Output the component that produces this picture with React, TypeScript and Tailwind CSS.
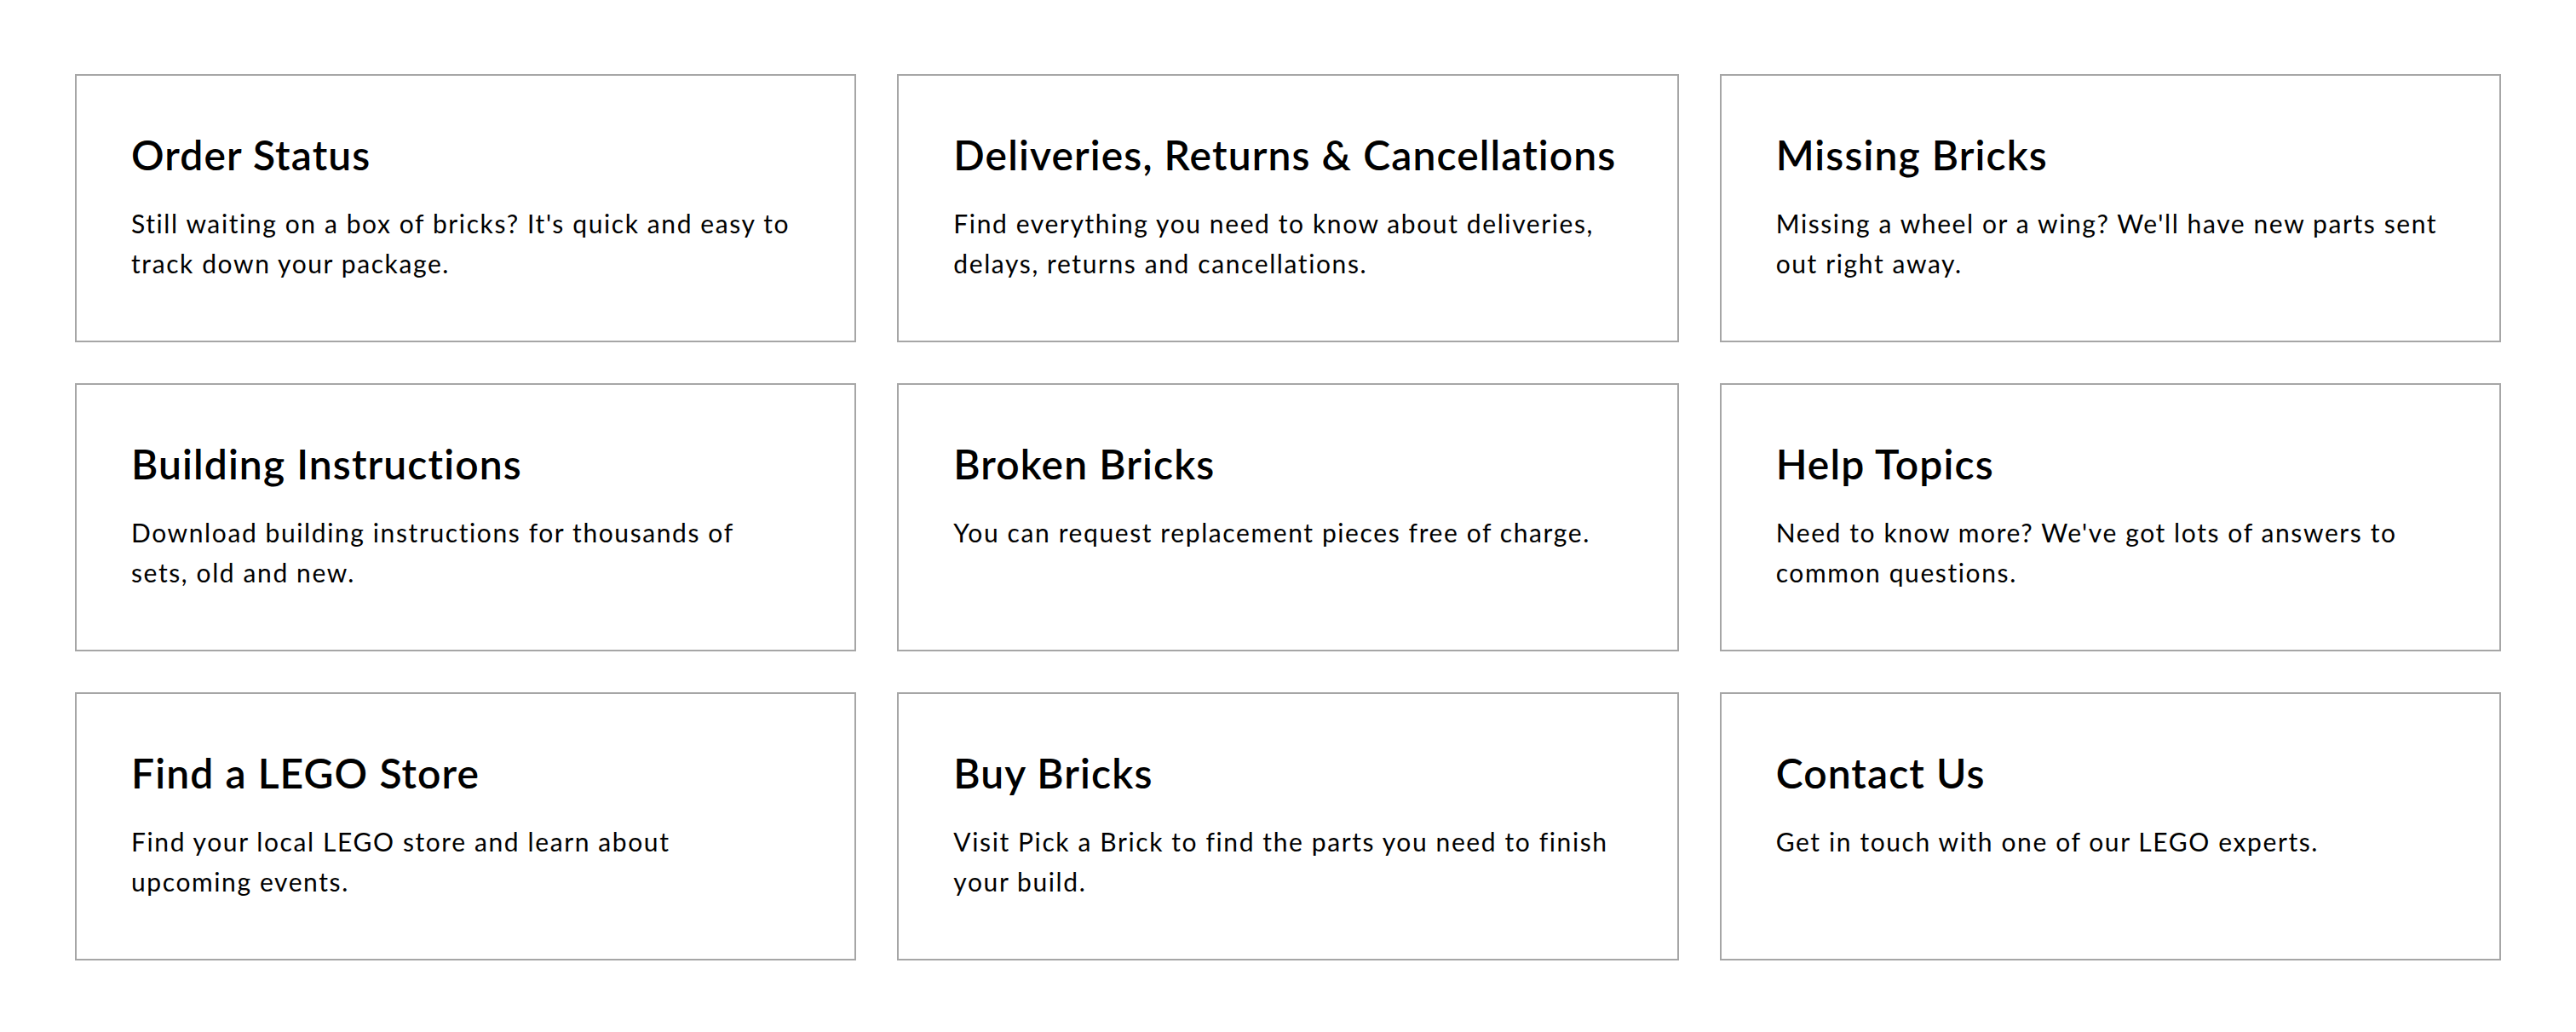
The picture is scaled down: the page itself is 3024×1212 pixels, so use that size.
import React from "react";

const cards: { title: string; lines: string[] }[] = [
  { title: "Order Status", lines: ["Still waiting on a box of bricks? It's quick and easy to", "track down your package."] },
  { title: "Deliveries, Returns & Cancellations", lines: ["Find everything you need to know about deliveries,", "delays, returns and cancellations."] },
  { title: "Missing Bricks", lines: ["Missing a wheel or a wing? We'll have new parts sent", "out right away."] },
  { title: "Building Instructions", lines: ["Download building instructions for thousands of", "sets, old and new."] },
  { title: "Broken Bricks", lines: ["You can request replacement pieces free of charge."] },
  { title: "Help Topics", lines: ["Need to know more? We've got lots of answers to", "common questions."] },
  { title: "Find a LEGO Store", lines: ["Find your local LEGO store and learn about", "upcoming events."] },
  { title: "Buy Bricks", lines: ["Visit Pick a Brick to find the parts you need to finish", "your build."] },
  { title: "Contact Us", lines: ["Get in touch with one of our LEGO experts."] },
];

export default function App() {
  return (
    <div
      className="min-h-[1212px] w-full bg-white text-black"
      style={{ fontFamily: "Lato, 'Noto Sans', sans-serif" }}
    >
      <div className="grid grid-cols-3 gap-x-[48px] gap-y-[48px] pl-[88px] pr-[88px] pt-[87px]">
        {cards.map((c) => (
          <a
            key={c.title}
            href="#"
            className="block border-2 border-[#a6a6a6] px-[64px] pt-[64px] pb-[67px]"
          >
            <h2 className="text-[48px] font-semibold leading-[58px] tracking-[1.1px] whitespace-nowrap">
              {c.title}
            </h2>
            <p className="mt-[28px] text-[30px] leading-[47px] tracking-[1.6px]">
              {c.lines.map((l, i) => (
                <span key={i} className="block whitespace-nowrap">
                  {l}
                </span>
              ))}
              {c.lines.length === 1 && <span className="block">&nbsp;</span>}
            </p>
          </a>
        ))}
      </div>
    </div>
  );
}
